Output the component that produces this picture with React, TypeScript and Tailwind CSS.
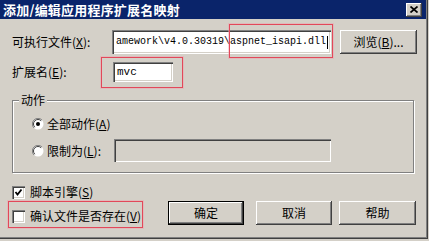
import React from 'react';

const raised =
  'bg-[#d4d0c8] shadow-[inset_-1px_-1px_#404040,inset_1px_1px_#ffffff,inset_-2px_-2px_#808080]';
const sunken =
  'shadow-[inset_1px_1px_#808080,inset_2px_2px_#404040,inset_-1px_-1px_#ffffff,inset_-2px_-2px_#d4d0c8]';
const mark =
  'absolute border border-[#e2485a] shadow-[0_0_0_1px_rgba(240,160,170,0.45)] pointer-events-none';

function Key({ k }: { k: string }) {
  return (
    <span>
      (<u>{k}</u>)
    </span>
  );
}

function Radio({ checked }: { checked?: boolean }) {
  return (
    <svg width="12" height="12" viewBox="0 0 12 12" className="shrink-0">
      <circle cx="6" cy="6" r="5.5" fill="#ffffff" />
      <path d="M10 2 A5.5 5.5 0 0 0 2 10" fill="none" stroke="#808080" strokeWidth="1" />
      <path d="M9.2 2.8 A4.5 4.5 0 0 0 2.8 9.2" fill="none" stroke="#404040" strokeWidth="1" />
      {checked && <circle cx="6" cy="6" r="2" fill="#000000" />}
    </svg>
  );
}

function Check({ checked }: { checked?: boolean }) {
  return (
    <div className={`w-[13px] h-[13px] bg-white shrink-0 relative ${sunken}`}>
      {checked && (
        <svg width="13" height="13" viewBox="0 0 13 13" className="absolute left-0 top-0">
          <polyline points="3.5,6 5.5,8.5 9.5,3.5" fill="none" stroke="#000" strokeWidth="1.8" />
        </svg>
      )}
    </div>
  );
}

export default function App() {
  return (
    <div className="w-[429px] h-[241px] bg-[#d4d0c8] overflow-hidden relative text-[12px] leading-none text-black font-['Noto_Sans_CJK_SC','Noto_Sans',sans-serif]">
      <div className="w-[428px] h-[239px] flex flex-col shadow-[inset_-1px_-1px_#404040,inset_-2px_-2px_#808080]">
        {/* Title bar */}
        <div className="mr-[2px] h-[19px] bg-[#0a246a] flex items-center justify-between pl-[3px] pr-[4px]">
          <span className="text-white font-bold text-[13px] tracking-[0.2px]">添加/编辑应用程序扩展名映射</span>
          <div className={`w-[16px] h-[14px] flex items-center justify-center ${raised}`}>
            <svg width="8" height="7" viewBox="0 0 8 7">
              <path d="M0.5 0.5 L7.5 6.5 M7.5 0.5 L0.5 6.5" stroke="#000" strokeWidth="1.7" />
            </svg>
          </div>
        </div>

        <div className="pl-[12px] flex flex-col">
          {/* Executable */}
          <div className="mt-[11px] flex items-center">
            <span className="w-[100px]">
              可执行文件<Key k="X" />:
            </span>
            <div className={`w-[219px] h-[24px] bg-white flex items-center justify-end overflow-hidden pr-[3px] ${sunken}`}>
              <span className="whitespace-nowrap font-['Liberation_Mono',monospace] text-[10px]">
                amework\v4.0.30319\aspnet_isapi.dll
              </span>
              <span className="w-[1px] h-[13px] bg-black ml-[1px] shrink-0" />
            </div>
            <div className={`ml-[9px] w-[77px] h-[24px] flex items-center justify-center ${raised}`}>
              浏览<Key k="B" />...
            </div>
          </div>

          {/* Extension */}
          <div className="mt-[8px] flex items-center">
            <span className="w-[101px]">
              扩展名<Key k="E" />:
            </span>
            <div className={`w-[60px] h-[20px] bg-white flex items-center pl-[4px] ${sunken}`}>
              <span className="font-['Liberation_Mono',monospace] text-[11px]">mvc</span>
            </div>
          </div>

          {/* Verbs group */}
          <div className="mt-[18px] relative w-[402px] h-[73px] border border-[#808080] shadow-[1px_1px_0_#ffffff,inset_1px_1px_0_#ffffff] pl-[19px] flex flex-col">
            <span className="absolute left-[6px] -top-[7px] px-[2px] bg-[#d4d0c8]">动作</span>
            <div className="mt-[16px] h-[14px] flex items-center gap-[3px]">
              <Radio checked />
              <span>
                全部动作<Key k="A" />
              </span>
            </div>
            <div className="mt-[8px] flex items-center">
              <Radio />
              <span className="ml-[3px] w-[67px]">
                限制为<Key k="L" />:
              </span>
              <div className={`w-[217px] h-[23px] bg-[#d4d0c8] ${sunken}`} />
            </div>
          </div>

          {/* Bottom */}
          <div className="flex items-start">
            <div className="w-[156px] flex flex-col mt-[11px]">
              <div className="h-[16px] flex items-center gap-[5px]">
                <Check checked />
                <span>
                  脚本引擎<Key k="S" />
                </span>
              </div>
              <div className="mt-[8px] h-[16px] flex items-center gap-[5px]">
                <Check />
                <span>
                  确认文件是否存在<Key k="V" />
                </span>
              </div>
            </div>
            <div className="mt-[28px] flex items-start">
              <div className="w-[76px] h-[24px] border border-black">
                <div className={`w-full h-full flex items-center justify-center ${raised}`}>确定</div>
              </div>
              <div className={`ml-[12px] w-[76px] h-[24px] flex items-center justify-center ${raised}`}>取消</div>
              <div className={`ml-[7px] w-[77px] h-[24px] flex items-center justify-center ${raised}`}>帮助</div>
            </div>
          </div>
        </div>
      </div>

      {/* annotation boxes */}
      <div className={`${mark} left-[229px] top-[24px] w-[104px] h-[34px]`} />
      <div className={`${mark} left-[101px] top-[57px] w-[82px] h-[31px]`} />
      <div className={`${mark} left-[8px] top-[201px] w-[135px] h-[27px]`} />
    </div>
  );
}
